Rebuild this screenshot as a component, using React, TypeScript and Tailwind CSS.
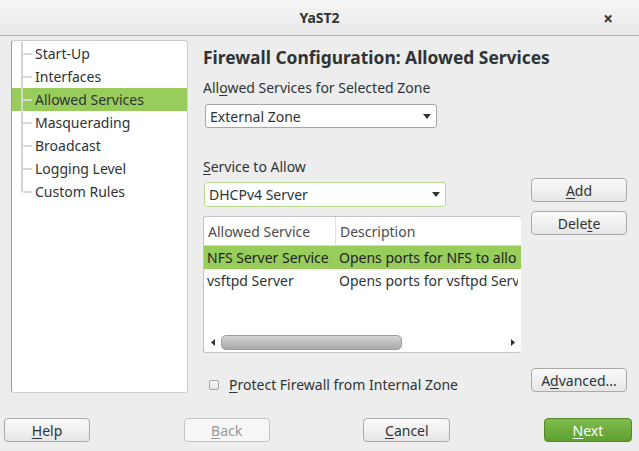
const treeItems = [
  "Start-Up",
  "Interfaces",
  "Allowed Services",
  "Masquerading",
  "Broadcast",
  "Logging Level",
  "Custom Rules",
];

function Caret() {
  return (
    <svg width="8" height="5" viewBox="0 0 8 5" className="shrink-0">
      <path d="M0 0 H8 L4 5 Z" fill="#2e3436" />
    </svg>
  );
}

function Button({
  children,
  className = "",
  disabled = false,
  primary = false,
}: {
  children: React.ReactNode;
  className?: string;
  disabled?: boolean;
  primary?: boolean;
}) {
  const look = primary
    ? "border-[#4f8a25] bg-gradient-to-b from-[#80bb4d] to-[#5f9f30] text-white"
    : disabled
      ? "border-[#c4c4c4] bg-[#f6f6f6] text-[#9a9a9a]"
      : "border-[#a9a9a9] bg-gradient-to-b from-[#fafafa] to-[#e6e6e6] text-[#2e3436]";
  return (
    <div
      className={`flex h-[24px] items-center justify-center rounded-[4px] border text-[14px] ${look} ${className}`}
    >
      {children}
    </div>
  );
}

function TreePanel() {
  return (
    <div className="ml-[11px] mt-[4px] h-[353px] w-[177px] rounded-[3px] border border-[#cdcdcd] border-l-[#9c9c9c] bg-white pt-px">
      {treeItems.map((item, i) => {
        const last = i === treeItems.length - 1;
        const selected = item === "Allowed Services";
        return (
          <div
            key={item}
            className={`flex h-[23px] items-center ${selected ? "bg-[#98cc5b]" : ""}`}
          >
            <div className="relative h-full w-[23px] shrink-0">
              <div
                className={`absolute left-[9px] top-0 w-[2px] bg-[#d4d4d4] ${last ? "h-[12px]" : "h-full"}`}
              />
              <div className="absolute left-[11px] top-[11px] h-[2px] w-[9px] bg-[#d8d8d8]" />
            </div>
            <span className="text-[14px] text-[#2e3436]">{item}</span>
          </div>
        );
      })}
    </div>
  );
}

function ServiceTable() {
  return (
    <div className="mt-[9px] flex h-[137px] w-[318px] flex-col overflow-hidden rounded-[3px] border border-[#c4c4c4] border-r-0 bg-white">
      <div className="flex h-[29px] shrink-0 items-center border-b border-[#dadada] text-[14px] text-[#4c4c4c]">
        <div className="flex h-full w-[132px] shrink-0 items-center border-r border-[#e0e0e0] pl-[4px]">
          Allowed Service
        </div>
        <div className="whitespace-nowrap pl-[4px]">Description</div>
      </div>
      <div className="flex h-[23px] shrink-0 items-center whitespace-nowrap bg-[#98cc5b] text-[14px] text-[#1f2325]">
        <div className="w-[132px] shrink-0 pl-[3px]">NFS Server Service</div>
        <div className="w-[182px] overflow-hidden pl-[3px]">Opens ports for NFS to allo</div>
      </div>
      <div className="flex h-[23px] shrink-0 items-center whitespace-nowrap text-[14px] text-[#2e3436]">
        <div className="w-[132px] shrink-0 pl-[3px]">vsftpd Server</div>
        <div className="w-[182px] overflow-hidden pl-[3px]">Opens ports for vsftpd Serv</div>
      </div>
      <div className="flex-1" />
      <div className="flex h-[18px] shrink-0 items-center pb-[1px]">
        <svg width="4" height="7" viewBox="0 0 4 7" className="ml-[7px]">
          <path d="M4 0 V7 L0 3.5 Z" fill="#2e3436" />
        </svg>
        <div className="ml-[6px] h-[15px] w-[181px] rounded-[5px] border border-[#9c9c9c] bg-gradient-to-b from-[#d4d4d4] to-[#a9a9a9]" />
        <div className="flex-1" />
        <svg width="4" height="7" viewBox="0 0 4 7" className="mr-[6px]">
          <path d="M0 0 V7 L4 3.5 Z" fill="#2e3436" />
        </svg>
      </div>
    </div>
  );
}

export default function App() {
  return (
    <div
      className="flex h-[451px] w-[639px] flex-col overflow-hidden bg-[#ededed] text-[#2e3436]"
      style={{ fontFamily: '"Noto Sans", "DejaVu Sans", sans-serif' }}
    >
      <div className="relative flex h-[36px] shrink-0 items-center justify-center border-b border-[#b3b3b3] bg-gradient-to-b from-[#f6f6f6] to-[#e8e8e8]">
        <span className="text-[14px] font-bold text-[#2e3436]">YaST2</span>
        <span className="absolute right-[26px] top-[6px] text-[17px] font-bold">×</span>
      </div>

      <div className="flex">
        <TreePanel />

        <div className="ml-[15px] flex flex-col">
          <div className="mt-[9px] h-[24px] whitespace-nowrap text-[17.4px] font-bold leading-[24px] text-[#2e3436]">
            Firewall Configuration: Allowed Services
          </div>
          <div className="mt-[10px] h-[18px] text-[14px] leading-[18px]">
            All<span className="underline underline-offset-2">o</span>wed Services for Selected Zone
          </div>
          <div className="ml-[2px] mt-[7px] flex h-[24px] w-[232px] items-center justify-between rounded-[3px] border border-[#a6a6a6] bg-white pl-[4px] pr-[5px] text-[14px]">
            <span>External Zone</span>
            <Caret />
          </div>

          <div className="flex">
            <div className="flex flex-col">
              <div className="mt-[30px] h-[18px] text-[14px] leading-[18px]">
                <span className="underline underline-offset-2">S</span>ervice to Allow
              </div>
              <div className="ml-[1px] mt-[6px] flex h-[25px] w-[242px] items-center justify-between rounded-[3px] border border-[#b6da8d] bg-white pl-[4px] pr-[5px] text-[14px]">
                <span>DHCPv4 Server</span>
                <Caret />
              </div>
              <ServiceTable />
              <div className="mt-[21px] flex items-center">
                <div className="ml-[6px] h-[10px] w-[10px] rounded-[2px] border border-[#a3a3a3] bg-gradient-to-b from-[#fbfbfb] to-[#e4e4e4]" />
                <span className="ml-[10px] text-[14px]">
                  <span className="underline underline-offset-2">P</span>rotect Firewall from Internal Zone
                </span>
              </div>
            </div>

            <div className="ml-[10px] flex flex-col">
              <Button className="mt-[50px] w-[96px]">
                <span className="underline underline-offset-2">A</span>dd
              </Button>
              <Button className="mt-[9px] w-[96px]">
                Dele<span className="underline underline-offset-2">t</span>e
              </Button>
              <Button className="mt-[133px] w-[96px]">
                A<span className="underline underline-offset-2">d</span>vanced...
              </Button>
            </div>
          </div>
        </div>
      </div>

      <div className="mt-[23px] flex justify-between pl-[4px] pr-[7px]">
        <Button className="w-[86px]">
          <span className="underline underline-offset-2">H</span>elp
        </Button>
        <Button className="w-[86px]" disabled>
          <span className="underline underline-offset-2">B</span>ack
        </Button>
        <Button className="w-[87px]">
          <span className="underline underline-offset-2">C</span>ancel
        </Button>
        <Button className="w-[88px]" primary>
          <span className="underline underline-offset-2">N</span>ext
        </Button>
      </div>
    </div>
  );
}
